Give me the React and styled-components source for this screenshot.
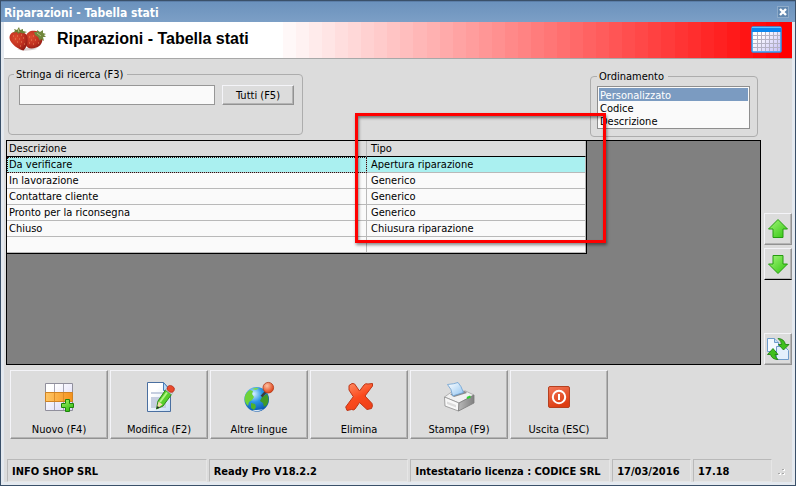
import React, { useState } from "react";
import styled, { createGlobalStyle, css } from "styled-components";

const stati = [
    { descrizione: "Da verificare", tipo: "Apertura riparazione" },
    { descrizione: "In lavorazione", tipo: "Generico" },
    { descrizione: "Contattare cliente", tipo: "Generico" },
    { descrizione: "Pronto per la riconsegna", tipo: "Generico" },
    { descrizione: "Chiuso", tipo: "Chiusura riparazione" },
    { descrizione: "", tipo: "" },
];

const ordinamenti = ["Personalizzato", "Codice", "Descrizione"];

// la sfumatura della testata e' a fasce, non continua
const FASCE = 39;
const INIZIO = 35.4;
const sfumatura = Array.from({ length: FASCE }, (_, i) => {
    const v = Math.round(255 - (255 * (i + 1)) / FASCE);
    const da = INIZIO + ((100 - INIZIO) * i) / FASCE;
    const a = INIZIO + ((100 - INIZIO) * (i + 1)) / FASCE;
    return `rgb(255,${v},${v}) ${da}% ${a}%`;
}).join(", ");

const IconaFragole = () => (
    <svg width="38" height="25" viewBox="0 0 38 25" aria-hidden="true">
        <defs>
            <radialGradient id="fragola" cx="35%" cy="35%" r="75%">
                <stop offset="0" stopColor="#dc4a2e" />
                <stop offset="0.6" stopColor="#bf2f1f" />
                <stop offset="1" stopColor="#8c1a12" />
            </radialGradient>
        </defs>
        <path d="M8 22.500q8 2.500 20-.5l-4-2z" fill="#d8d0d0" />
        <path d="M17 9c1-4 5-6 10-5 5 1 7 5 6.500 9-1 6-5 8-11 8.500-6 0-7.500-6-5.500-12.500z" fill="url(#fragola)" />
        <path d="M0.500 11C0.500 7 3 4.500 8 4.500c6-.5 10 2 10.500 6 .5 6-1 10-4 13C10 22.500 1 17 .5 11z" fill="url(#fragola)" />
        <path d="M4 6l2-2-1-2 3 1 2-3 1 3 3-1v2l4 1-4 1.500-3-1-2 1.500-1-2z" fill="#6d7f35" />
        <path d="M25 5l3 0 0-2 3 2 3-2 0 3 3 1-2 1 2 2-3 0 1 4-3-2-1 2-2-4-3-2z" fill="#71883c" />
        <path d="M28 6l4 3M9 2l1 3" stroke="#b5c383" />
        <path d="M4 9h1M8 9h1M12 8h1M6 12h1M10 12h1M14 11h1M8 15h1M12 15h1M11 19h1M15 17h1M20 10h1M24 9h1M22 13h1M26 13h1M20 16h1M24 17h1M29 16h1" stroke="#e98a5c" />
    </svg>
);

const IconaCalendario = () => (
    <svg width="31" height="27" viewBox="0 0 31 27" aria-hidden="true">
        <defs>
            <linearGradient id="celle" x2="1" y2="1">
                <stop offset="0.3" stopColor="#ffffff" />
                <stop offset="1" stopColor="#c3bdf8" />
            </linearGradient>
        </defs>
        <rect x="1" y="1" width="29" height="25" rx="1" fill="url(#celle)" stroke="#2b9bf0" strokeWidth="1.500" />
        <path d="M1 1h29v5H1z" fill="#0a86ee" />
        <path d="M1 1h29v1H1z" fill="#5cc4ff" />
        <path d="M6.500 6v19M10.500 6v19M14.500 6v19M18.500 6v19M22.500 6v19M26.500 6v19M2 9.500h27M2 13.500h27M2 17.500h27M2 21.500h27" stroke="#b4b2c4" />
    </svg>
);

const IconaNuovo = () => (
    <svg width="32" height="32" viewBox="0 0 32 32" aria-hidden="true">
        <defs>
            <linearGradient id="arancio" x2="1">
                <stop offset="0" stopColor="#ffc665" />
                <stop offset="1" stopColor="#f5921c" />
            </linearGradient>
            <linearGradient id="lilla" x2="1" y2="1">
                <stop offset="0.2" stopColor="#ffffff" />
                <stop offset="1" stopColor="#d6d3f6" />
            </linearGradient>
            <linearGradient id="verde" x2="0.6" y2="1">
                <stop offset="0" stopColor="#a6f56a" />
                <stop offset="1" stopColor="#35bd13" />
            </linearGradient>
        </defs>
        <path d="M2.500 2.500h27v27h-27z" fill="url(#lilla)" stroke="#908f9c" />
        <path d="M11.500 3v26M20.500 3v26" stroke="#a5a4b2" />
        <path d="M2.500 11.500h27v9h-27z" fill="url(#arancio)" stroke="#d18322" />
        <path d="M11.500 12v8M20.500 12v8" stroke="#dc8d2b" />
        <path d="M22.500 18.500h4v4h4v4h-4v4h-4v-4h-4v-4h4z" fill="url(#verde)" stroke="#1c840c" />
    </svg>
);

const IconaModifica = () => (
    <svg width="32" height="32" viewBox="0 0 32 32" aria-hidden="true">
        <defs>
            <linearGradient id="foglio" x2="1" y2="1">
                <stop offset="0.3" stopColor="#ffffff" />
                <stop offset="1" stopColor="#c6ddf5" />
            </linearGradient>
        </defs>
        <path d="M4.500 1.500h16l7 8v21h-23z" fill="url(#foglio)" stroke="#4a6fa0" />
        <path d="M20.500 1.500v8h7z" fill="#b9dcf6" stroke="#4a7db8" />
        <path d="M8 11h15v2H8zM8 16h15v11H8z" fill="#c6cfe0" />
        <path d="M22.500 9l6 4.500-8.500 11.500-6.500 3 1.500-8z" fill="#58cf2b" stroke="#2d8a16" />
        <path d="M24 11.500l-7 9.500" stroke="#b0f583" strokeWidth="2" />
        <path d="M15.500 20.500l4 3-5.500 4z" fill="#f5dcae" />
        <path d="M14.500 25l-1 3 3-1.500z" fill="#222" />
        <path d="M22.500 9l6 4.500 1.500-2-6-4.500z" fill="#d9dee6" stroke="#8d97a8" strokeWidth="0.5" />
        <ellipse cx="27.700" cy="8" rx="3.700" ry="3.200" transform="rotate(25 28 8)" fill="#e94a2c" stroke="#b42c18" strokeWidth="0.700" />
    </svg>
);

const IconaLingue = () => (
    <svg width="32" height="32" viewBox="0 0 32 32" aria-hidden="true">
        <defs>
            <radialGradient id="globo" cx="38%" cy="28%" r="75%">
                <stop offset="0" stopColor="#d4f0ff" />
                <stop offset="0.45" stopColor="#2b96e6" />
                <stop offset="1" stopColor="#0754ac" />
            </radialGradient>
            <radialGradient id="spillo" cx="38%" cy="32%" r="70%">
                <stop offset="0" stopColor="#ffc2a2" />
                <stop offset="1" stopColor="#dc3d14" />
            </radialGradient>
        </defs>
        <circle cx="13.700" cy="18.300" r="12.300" fill="url(#globo)" />
        <path d="M2 15c1-3 3-5 5-6l3 1-1 3 2 3-2 3-3 2-1 4c-3-3-4-6-3-10z" fill="#6fd238" />
        <path d="M9 8q3-2 7-1l-3 2z" fill="#7fd94a" />
        <path d="M8 22l4 1 1 3-2 3-3-2z" fill="#4fb32b" />
        <path d="M19 16l5-3c2 3 2 7 0 11l-3 2-1-4-3-2z" fill="#3f9a26" />
        <path d="M9 29c4 2 8 1 12-1-4 1-8 1-12 1z" fill="#d9e7f4" />
        <path d="M18.500 15.500l4.500-5" stroke="#3b3b3b" strokeWidth="2.500" />
        <circle cx="25.300" cy="6.700" r="5.300" fill="url(#spillo)" stroke="#b13a18" strokeWidth="0.800" />
    </svg>
);

const IconaElimina = () => (
    <svg width="32" height="32" viewBox="0 0 32 32" aria-hidden="true">
        <defs>
            <linearGradient id="croce" x2="0.500" y2="1">
                <stop offset="0" stopColor="#ff9066" />
                <stop offset="0.6" stopColor="#fb4a1e" />
                <stop offset="1" stopColor="#f0421a" />
            </linearGradient>
        </defs>
        <path
            d="M6 4.500L9 2.500Q12 2 13 5L16.500 10 21 4Q22.500 2 25 3L29.500 2.500 29.500 5 22 15 29 22.500Q30 25 28.500 27.500L24 28.500 16.500 21.500 12 28Q11 29.500 8.500 28.500L4 29.500 2.700 26 10.300 15.700 6 9z"
            fill="url(#croce)" stroke="#bf3516" strokeLinejoin="round"
        />
    </svg>
);

const IconaStampa = () => (
    <svg width="32" height="32" viewBox="0 0 32 32" aria-hidden="true">
        <defs>
            <linearGradient id="carta" x2="1" y2="1">
                <stop offset="0" stopColor="#ffffff" />
                <stop offset="1" stopColor="#8fc4f2" />
            </linearGradient>
            <linearGradient id="fianco" x2="1">
                <stop offset="0" stopColor="#b8b8b8" />
                <stop offset="1" stopColor="#808080" />
            </linearGradient>
        </defs>
        <path d="M1.500 16l7-5 14-1 8.500 4-15 8z" fill="#f1f1f1" stroke="#a3a3a3" strokeWidth="0.800" />
        <path d="M1.500 16L16 22l-.5 8L2 25z" fill="#f8f8f8" stroke="#8e8e8e" strokeWidth="0.800" />
        <path d="M16 22l15-8v8l-15.500 8z" fill="url(#fianco)" stroke="#7c7c7c" strokeWidth="0.800" />
        <path d="M4 20.500l9 3.500v2.500L4 23z" fill="#dcdcdc" />
        <path d="M7 13l15-3 2 2-13 4z" fill="#8b8b8b" />
        <path d="M4.500 3.500Q11 3 15 1.500q3 3 5.500 10L9.500 15Q9 8 4.500 3.500z" fill="url(#carta)" stroke="#6b9fd2" strokeWidth="0.800" />
        <path d="M24 17l3.500-1.500" stroke="#2fd12f" strokeWidth="2" />
    </svg>
);

const IconaUscita = () => (
    <svg width="32" height="32" viewBox="0 0 32 32" aria-hidden="true">
        <defs>
            <linearGradient id="rosso" x2="0.400" y2="1">
                <stop offset="0" stopColor="#f2785a" />
                <stop offset="1" stopColor="#dd3c10" />
            </linearGradient>
        </defs>
        <rect x="5.500" y="5.500" width="21" height="21" rx="1.500" fill="url(#rosso)" stroke="#b5401f" />
        <circle cx="16" cy="16" r="6.200" fill="none" stroke="#fff" strokeWidth="2" />
        <path d="M16 13v6" stroke="#fff" strokeWidth="2" />
    </svg>
);

const IconaFreccia = ({ giu }) => (
    <svg width="22" height="22" viewBox="0 0 22 22" aria-hidden="true">
        <defs>
            <linearGradient id="freccia" x2="1" y2="1">
                <stop offset="0" stopColor="#a5f77c" />
                <stop offset="1" stopColor="#2fc40d" />
            </linearGradient>
        </defs>
        <path
            d={giu ? "M11 20.500L1.500 11H6V2.500h10V11h4.500z" : "M11 1.500L20.500 11H16v8.500H6V11H1.500z"}
            fill="url(#freccia)" stroke="#259c10"
        />
    </svg>
);

const IconaAggiorna = () => (
    <svg width="24" height="24" viewBox="0 0 24 24" aria-hidden="true">
        <path d="M1.500 1.500h7l4 4v9h-11z" fill="#f4f9ff" stroke="#6f9ccb" />
        <path d="M8.500 1.500v4h4" fill="#c4dff5" stroke="#6f9ccb" />
        <path d="M10.500 9.500h8l4 4v9h-12z" fill="#e3effc" stroke="#6f9ccb" />
        <path d="M12 1.500q6 0 7.500 6h3.500l-5.500 5.500-5-5.500h3Q15.500 4 12 1.500z" fill="#3fc01c" stroke="#16780a" strokeWidth="0.800" />
        <path d="M12 22.500q-6 0-7.500-5H1.500L7 11.500l5 6H9q.5 3 3 5z" fill="#3fc01c" stroke="#16780a" strokeWidth="0.800" />
    </svg>
);

const IconaChiudi = () => (
    <svg width="10" height="10" viewBox="0 0 10 10" aria-hidden="true">
        <path d="M2 2l6 6M8 2l-6 6" stroke="#fff" strokeWidth="2.400" />
    </svg>
);

const comandi = [
    { testo: "Nuovo (F4)", Icona: IconaNuovo },
    { testo: "Modifica (F2)", Icona: IconaModifica },
    { testo: "Altre lingue", Icona: IconaLingue },
    { testo: "Elimina", Icona: IconaElimina },
    { testo: "Stampa (F9)", Icona: IconaStampa },
    { testo: "Uscita (ESC)", Icona: IconaUscita },
];

const App = () => {
    const [ricerca, setRicerca] = useState("");
    const [ordine, setOrdine] = useState("Personalizzato");
    const [riga, setRiga] = useState(0);

    return (
        <>
            <StileGlobale />
            <Finestra>
                <BarraTitolo>
                    <span>Riparazioni - Tabella stati</span>
                    <BotonChiudi aria-label="Chiudi"><IconaChiudi /></BotonChiudi>
                </BarraTitolo>
                <Corpo>
                    <Testata>
                        <IconaFragole />
                        <h1>Riparazioni - Tabella stati</h1>
                        <IconaCalendario />
                    </Testata>
                    <Filtri>
                        <Gruppo $larghezza="295px">
                            <legend><label htmlFor="ricerca">Stringa di ricerca (F3)</label></legend>
                            <RigaRicerca>
                                <CampoRicerca id="ricerca" value={ricerca} onChange={(e) => setRicerca(e.target.value)} />
                                <BotonTutti onClick={() => setRicerca("")}>Tutti (F5)</BotonTutti>
                            </RigaRicerca>
                        </Gruppo>
                        <Gruppo $larghezza="168px" $basso>
                            <legend><label htmlFor="ordinamento">Ordinamento</label></legend>
                            <Elenco id="ordinamento" size={3} value={ordine} onChange={(e) => setOrdine(e.target.value)}>
                                {ordinamenti.map((o) => <option key={o}>{o}</option>)}
                            </Elenco>
                        </Gruppo>
                    </Filtri>
                    <Centro>
                        <Griglia>
                            <Tabella>
                                <colgroup>
                                    <col width="360" />
                                    <col width="219" />
                                </colgroup>
                                <thead>
                                    <tr><th>Descrizione</th><th>Tipo</th></tr>
                                </thead>
                                <tbody>
                                    {stati.map((s, i) => (
                                        <Riga key={i} $attiva={i === riga} onClick={() => setRiga(i)}>
                                            <td>{s.descrizione}</td>
                                            <td>{s.tipo}</td>
                                        </Riga>
                                    ))}
                                </tbody>
                            </Tabella>
                            <Evidenziatore />
                        </Griglia>
                        <Laterale>
                            <BotonLaterale aria-label="Sposta su"><IconaFreccia /></BotonLaterale>
                            <BotonLaterale aria-label="Sposta giù" $scuro><IconaFreccia giu /></BotonLaterale>
                            <BotonLaterale aria-label="Aggiorna" $fondo><IconaAggiorna /></BotonLaterale>
                        </Laterale>
                    </Centro>
                    <Comandi>
                        {comandi.map(({ testo, Icona }) => (
                            <BotonComando key={testo}>
                                <Icona />
                                {testo}
                            </BotonComando>
                        ))}
                    </Comandi>
                    <BarraStato>
                        <Cella $quota={200}>INFO SHOP SRL</Cella>
                        <Cella $quota={200}>Ready Pro V18.2.2</Cella>
                        <Cella $quota={200}>Intestatario licenza : CODICE SRL</Cella>
                        <Cella $quota={79}>17/03/2016</Cella>
                        <Cella $quota={79}>17.18</Cella>
                        <svg width="8" height="8" viewBox="0 0 8 8" aria-hidden="true">
                            <path d="M5 0h2v2H5zM5 4h2v2H5zM1 4h2v2H1z" fill="#fff" />
                            <path d="M4 0h2v1H4zM4 4h2v1H4zM0 4h2v1H0z" fill="#a8a8a8" />
                        </svg>
                    </BarraStato>
                </Corpo>
            </Finestra>
        </>
    );
};
export default App;

const StileGlobale = createGlobalStyle`
    *, *::before, *::after {
        box-sizing: border-box;
    }

    body {
        margin: 0;
    }

    body, button, input, select, option {
        font-family: "DejaVu Sans Condensed", "Noto Sans", sans-serif;
        font-size: 11px;
        line-height: 14px;
        color: #000;
    }
`;

const Finestra = styled.div`
    min-height: 100vh;
    display: flex;
    flex-direction: column;
    background: #e4e9ef;
    border: 1px solid #3a5069;
`;

const BarraTitolo = styled.header`
    height: 21px;
    flex: none;
    padding: 4px 6px 0 3px;
    display: flex;
    align-items: flex-start;
    justify-content: space-between;
    border-top: 1px solid #5b7ea8;
    background: linear-gradient(#6b92bd, #7c9fc6);
    color: #fff;
    font-weight: bold;
    font-size: 12px;
`;

const BotonChiudi = styled.button`
    display: flex;
    padding: 0;
    border: 1px solid #8eabc9;
    background: #6288b0;
`;

const Corpo = styled.main`
    flex: 1;
    margin: 0 3px 3px;
    display: flex;
    flex-direction: column;
    background: #dcdcdc;
`;

const Testata = styled.div`
    height: 37px;
    flex: none;
    padding: 0 10px 2px 5px;
    display: flex;
    align-items: center;
    gap: 10px;
    border-bottom: 1px solid #a8a8a8;
    background: linear-gradient(to right, #fff ${INIZIO}%, ${sfumatura});

    h1 {
        flex: 1;
        margin: 0;
        font: bold 16px/20px "Liberation Sans", Arial, sans-serif;
    }
`;

const Filtri = styled.div`
    padding: 7px 34px 3px 4px;
    display: flex;
    align-items: flex-start;
    justify-content: space-between;
`;

const Gruppo = styled.fieldset`
    width: ${(p) => p.$larghezza};
    height: 69px;
    margin: ${(p) => (p.$basso ? "2px 0 0" : "0")};
    padding: ${(p) => (p.$basso ? "2px 7px 2px 6px" : "3px 8px 3px 10px")};
    border: 1px solid #adadad;
    border-radius: 4px;

    legend {
        margin-left: ${(p) => (p.$basso ? "0" : "-5px")};
        padding: 2px 4px 0 2px;
    }
`;

const RigaRicerca = styled.div`
    display: flex;
    align-items: center;
    gap: 7px;
`;

const CampoRicerca = styled.input`
    flex: 1;
    min-width: 0;
    height: 20px;
    padding: 0 3px;
    border: 1px solid #979797;
    background: #fafafa;
`;

/* bordo in rilievo condiviso da tutti i pulsanti */
const rilievo = css`
    border: 1px solid;
    border-color: #f4f4f8 #929292 #929292 #f4f4f8;
    border-radius: 0;
    background: #dcdcdc;
    box-shadow: inset -1px -1px #b4b4b4;
`;

const BotonTutti = styled.button`
    width: 72px;
    height: 20px;
    padding: 2px 0 0;
    ${rilievo}
`;

const Elenco = styled.select`
    display: block;
    width: 100%;
    height: 43px;
    padding: 1px;
    appearance: none;
    overflow: hidden;
    outline: none;
    border: 1px solid #8e8e8e;
    border-radius: 0;
    background: #fafafa;

    option {
        height: 13px;
        min-height: 13px;
        padding: 1px 1px 0;
        line-height: 13px;
    }

    option:checked {
        background: #7b9bc1 linear-gradient(#7b9bc1, #7b9bc1);
        color: #fff;
    }
`;

const Centro = styled.div`
    flex: 1;
    padding: 0 0 0 2px;
    display: flex;
    gap: 3px;
`;

const Griglia = styled.div`
    flex: 1;
    position: relative;
    border: 1px solid #000;
    background: #808080;
`;

const Tabella = styled.table`
    table-layout: fixed;
    width: 579px;
    border-collapse: separate;
    border-spacing: 0;
    border-right: 1px solid #000;
    border-bottom: 1px solid #000;
    background: #fafafa;

    th, td {
        height: 16px;
        padding: 1px 2px 0;
        border-right: 1px solid #b9b9b9;
        border-bottom: 1px solid #b9b9b9;
        text-align: left;
        font-weight: normal;
    }

    th {
        background: #dcdcdc;
        border-bottom-color: #000;
    }

    th + th, td + td {
        padding-left: 4px;
    }
`;

const Riga = styled.tr`
    background: ${(p) => (p.$attiva ? "#aaf0f0" : "#fafafa")};

    td:first-child {
        outline: ${(p) => (p.$attiva ? "1px dotted #301010" : "none")};
        outline-offset: -1px;
    }
`;

const Evidenziatore = styled.div`
    position: absolute;
    top: -28px;
    left: 348px;
    width: 251px;
    height: 130px;
    border: 3px solid #ff0000;
    box-shadow: 1px 2px 3px rgba(0, 0, 0, .45), inset 1px 2px 3px rgba(0, 0, 0, .45);
    pointer-events: none;
`;

const Laterale = styled.div`
    width: 28px;
    display: flex;
    flex-direction: column;
    gap: 3px;
    padding-top: 73px;
`;

const BotonLaterale = styled.button`
    height: 32px;
    flex: none;
    padding: 0;
    display: flex;
    align-items: center;
    justify-content: center;
    ${rilievo}
    ${(p) => p.$scuro && "border-bottom-color: #000;"}
    ${(p) => p.$fondo && "margin-top: auto;"}
`;

const Comandi = styled.div`
    padding: 5px 6px 0;
    display: flex;
    gap: 2px;
`;

const BotonComando = styled.button`
    width: 98px;
    height: 69px;
    padding: 10px 0 0;
    display: flex;
    flex-direction: column;
    align-items: center;
    gap: 10px;
    ${rilievo}
`;

const BarraStato = styled.footer`
    margin-top: 20px;
    padding: 0 6px 0 3px;
    display: flex;
    align-items: center;
    gap: 2px;

    svg {
        margin-left: 4px;
        margin-top: 4px;
    }
`;

const Cella = styled.div`
    flex: ${(p) => `${p.$quota} 1 ${p.$quota}px`};
    min-width: 0;
    height: 23px;
    padding: 5px 4px 3px;
    border: 1px solid;
    border-color: #b9b9b9 #e6e6e6 #e6e6e6 #b9b9b9;
    font-weight: bold;
    white-space: nowrap;
`;
